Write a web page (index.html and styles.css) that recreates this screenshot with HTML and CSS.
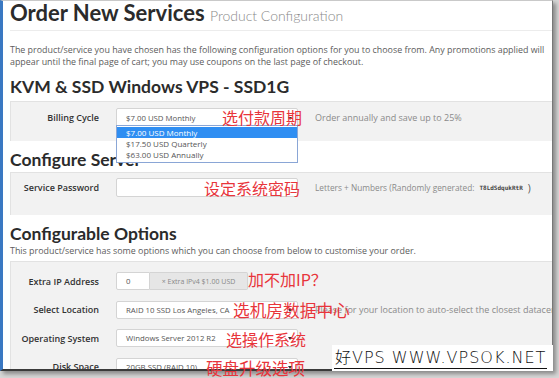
FILE: index.html
```html
<!DOCTYPE html>
<html lang="en">
<head>
    <meta charset="UTF-8">
    <title>Order New Services</title>
    <link rel="stylesheet" href="styles.css">
</head>
<body>
    <div class="shot">
        <div class="frame">
            <div class="page">
                <h1>Order New Services <small>Product Configuration</small></h1>
                <p class="intro">The product/service you have chosen has the following configuration options for you to choose from. Any promotions applied will<br>appear until the final page of cart; you may use coupons on the last page of checkout.</p>

                <h2>KVM &amp; SSD Windows VPS - SSD1G</h2>
                <div class="panel panel-billing">
                    <div class="row">
                        <div class="lbl">Billing Cycle</div>
                        <div class="field">
                            <div class="select">$7.00 USD Monthly<span class="caret"></span></div>
                            <ul class="dropdown">
                                <li class="on">$7.00 USD Monthly</li>
                                <li>$17.50 USD Quarterly</li>
                                <li>$63.00 USD Annually</li>
                            </ul>
                        </div>
                        <div class="hint">Order annually and save up to 25%</div>
                    </div>
                </div>

                <h2>Configure Server</h2>
                <div class="panel panel-server">
                    <div class="row">
                        <div class="lbl">Service Password</div>
                        <div class="field"><div class="input"></div></div>
                        <div class="hint hint-pass">Letters + Numbers (Randomly generated: <span class="code">T8LdSdqukRtR</span><span class="paren">)</span></div>
                    </div>
                </div>

                <h2>Configurable Options</h2>
                <p class="sub">This product/service has some options which you can choose from below to customise your order.</p>
                <div class="panel panel-options">
                    <div class="row">
                        <div class="lbl">Extra IP Address</div>
                        <div class="field field-qty">
                            <div class="input qty">0</div>
                            <div class="addon">&times; Extra IPv4 $1.00 USD</div>
                        </div>
                    </div>
                    <div class="row">
                        <div class="lbl">Select Location</div>
                        <div class="field"><div class="select">RAID 10 SSD Los Angeles, CA<span class="caret"></span></div></div>
                        <div class="hint">Please for your location to auto-select the closest datacenter</div>
                    </div>
                    <div class="row">
                        <div class="lbl">Operating System</div>
                        <div class="field"><div class="select">Windows Server 2012 R2<span class="caret"></span></div></div>
                    </div>
                    <div class="row">
                        <div class="lbl">Disk Space</div>
                        <div class="field"><div class="select">20GB SSD (RAID 10)<span class="caret"></span></div></div>
                    </div>
                </div>
            </div>
        </div>

        <!-- annotations drawn over the screenshot -->
        <div class="note note-billing">选付款周期</div>
        <div class="note note-pass">设定系统密码</div>
        <div class="note note-ip">加不加IP？</div>
        <div class="note note-loc">选机房数据中心</div>
        <div class="note note-os">选操作系统</div>
        <div class="note note-disk">硬盘升级选项</div>

        <div class="watermark">好VPS WWW.VPSOK.NET</div>
    </div>
</body>
</html>
```

FILE: styles.css
```css
:root {
    --texto: #333333;
    --texto-suave: #5c5c5c;
    --gris: #8a8a8a;
    --panel: #f2f2f2;
    --borde: #e2e2e2;
    --rojo: #e8353b;
}
body {
    margin: 0;
    background-color: #d6d6d6;
    font-family: 'Open Sans', sans-serif;
}
.shot {
    position: relative;
    width: 559px;
    height: 378px;
    overflow: hidden;
}
.frame {
    width: 549px;
    height: 368px;
    background-color: #ffffff;
    border-top: 1px solid #c9c9c9;
    border-left: 3px solid #3a78c2;
    border-right: 1px solid #777777;
    border-bottom: 2px solid #3a3a3a;
    box-shadow: 3px 3px 4px rgba(0, 0, 0, 0.35);
    overflow: hidden;
}
.page {
    padding-left: 7px;
}
h1 {
    margin: 0;
    padding: 0 0 5px 0;
    height: 24px;
    line-height: 24px;
    font-family: 'Lato', sans-serif;
    font-size: 22px;
    font-weight: 700;
    color: #2b2b2b;
    border-bottom: 1px solid #ececec;
    white-space: nowrap;
}
h1 small {
    font-size: 14px;
    font-weight: 300;
    color: var(--gris);
}
.intro {
    margin: 13px 0 0 0;
    font-size: 8.9px;
    line-height: 12px;
    color: var(--texto-suave);
    white-space: nowrap;
}
h2 {
    margin: 9px 0 0 0;
    font-family: 'Lato', sans-serif;
    font-size: 17.5px;
    line-height: 20px;
    font-weight: 700;
    color: #2b2b2b;
}
.sub {
    margin: 1px 0 0 0;
    font-size: 8.9px;
    line-height: 12px;
    color: var(--texto-suave);
    white-space: nowrap;
}
.panel {
    margin-top: 4px;
    background-color: var(--panel);
    border-top: 1px solid var(--borde);
    border-left: 1px solid var(--borde);
    box-sizing: border-box;
}
.panel-billing {
    height: 40px;
    padding-top: 6px;
}
.panel-server {
    height: 43px;
    margin-top: 2px;
    padding-top: 5px;
}
.panel-options {
    margin-top: 4px;
    height: 124px;
    padding-top: 10px;
    display: flex;
    flex-direction: column;
    gap: 10.5px;
}
.row {
    display: flex;
    align-items: center;
    height: 19px;
}
.panel-options .row {
    height: 18px;
}
.lbl {
    width: 88px;
    flex-shrink: 0;
    text-align: right;
    font-size: 9px;
    font-weight: 600;
    color: var(--texto);
    white-space: nowrap;
}
.field {
    position: relative;
    width: 182px;
    height: 100%;
    margin-left: 17px;
    flex-shrink: 0;
    display: flex;
}
.select,
.input {
    position: relative;
    flex: 1;
    height: 100%;
    box-sizing: border-box;
    background-color: #ffffff;
    border: 1px solid #d4d4d4;
    border-radius: 2px;
    padding-left: 9px;
    font-size: 7.8px;
    color: #555555;
    display: flex;
    align-items: center;
    white-space: nowrap;
}
.caret {
    position: absolute;
    right: 5px;
    top: 50%;
    margin-top: -1px;
    border-left: 2px solid transparent;
    border-right: 2px solid transparent;
    border-top: 3px solid #333333;
}
.field-qty {
    width: 132px;
}
.qty {
    flex: 0 0 34px;
    border-radius: 2px 0 0 2px;
}
.addon {
    flex: 1;
    background-color: #e6e6e6;
    border: 1px solid #d4d4d4;
    border-left: none;
    border-radius: 0 2px 2px 0;
    font-size: 7px;
    color: #888888;
    display: flex;
    align-items: center;
    justify-content: center;
    white-space: nowrap;
}
.dropdown {
    position: absolute;
    left: 0;
    top: 17px;
    width: 182px;
    margin: 0;
    padding: 1px 0 2px 0;
    list-style: none;
    box-sizing: border-box;
    background-color: #ffffff;
    border: 1px solid #8aa6d6;
    z-index: 2;
}
.dropdown li {
    height: 11px;
    line-height: 11px;
    padding-left: 9px;
    font-size: 8px;
    color: #555555;
}
.dropdown li.on {
    background-color: #2f8ef2;
    color: #ffffff;
}
.hint {
    margin-left: 17px;
    font-size: 9px;
    color: var(--gris);
    white-space: nowrap;
}
.hint-pass {
    display: flex;
    align-items: center;
    font-size: 8.3px;
}
.code {
    margin-left: 5px;
    font-family: 'DejaVu Sans Mono', monospace;
    font-size: 6px;
    font-weight: 700;
    color: #444444;
}
.paren {
    margin-left: 5px;
    font-size: 10px;
    color: #555555;
}
.note {
    position: absolute;
    font-family: 'Noto Sans CJK SC', sans-serif;
    font-size: 16px;
    line-height: 16px;
    color: var(--rojo);
    white-space: nowrap;
    z-index: 3;
}
.note-billing { left: 222px; top: 109px; }
.note-pass { left: 204px; top: 180px; }
.note-ip { left: 248px; top: 271px; }
.note-loc { left: 233px; top: 302px; font-size: 16.7px; }
.note-os { left: 226px; top: 331px; }
.note-disk { left: 206px; top: 360px; font-size: 16.5px; }
.watermark {
    position: absolute;
    left: 332px;
    top: 345px;
    width: 221px;
    height: 26px;
    box-sizing: border-box;
    padding: 4px 0 0 3px;
    background-color: #ffffff;
    font-family: 'DejaVu Sans', 'Noto Sans CJK SC', sans-serif;
    font-size: 16px;
    font-weight: 300;
    letter-spacing: 1px;
    line-height: 18px;
    color: #111111;
    white-space: nowrap;
    z-index: 4;
}
.watermark::after {
    content: '';
    position: absolute;
    left: 2px;
    right: 6px;
    bottom: 2px;
    border-bottom: 1.5px solid #111111;
}
```
